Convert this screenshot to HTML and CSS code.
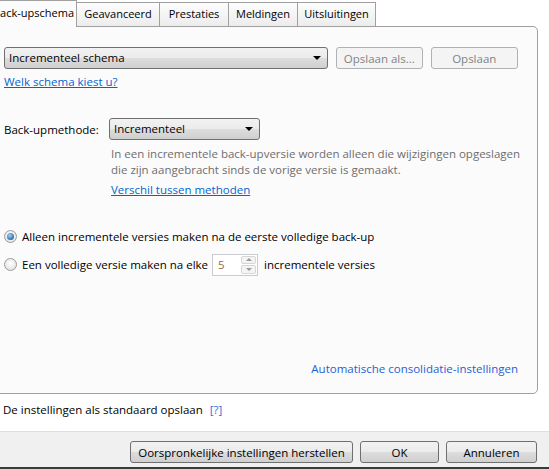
FILE: index.html
```html
<!DOCTYPE html>
<html lang="nl">
<head>
  <meta charset="UTF-8" />
  <title>Back-upinstellingen</title>
  <link rel="stylesheet" href="styles.css">
</head>
<body>
  <div class="dialog">
    <div class="tabs">
      <div class="tab active tab-schedule">Back-upschema</div>
      <div class="tab tab-advanced">Geavanceerd</div>
      <div class="tab tab-performance">Prestaties</div>
      <div class="tab tab-notify">Meldingen</div>
      <div class="tab tab-exclude">Uitsluitingen</div>
    </div>

    <section class="panel">
      <div class="scheme-row">
        <div class="combo combo-scheme">Incrementeel schema<span class="arrow"></span></div>
        <button class="btn btn-save-as" disabled>Opslaan als...</button>
        <button class="btn btn-save" disabled>Opslaan</button>
      </div>
      <a class="link scheme-help" href="#">Welk schema kiest u?</a>

      <div class="method-row">
        <span class="method-label">Back-upmethode:</span>
        <div class="combo combo-method">Incrementeel<span class="arrow"></span></div>
      </div>
      <div class="method-info">
        <p>In een incrementele back-upversie worden alleen die wijzigingen opgeslagen<br>die zijn aangebracht sinds de vorige versie is gemaakt.</p>
        <a class="link" href="#">Verschil tussen methoden</a>
      </div>

      <div class="options">
        <label class="radio-row">
          <span class="radio checked"></span>
          Alleen incrementele versies maken na de eerste volledige back-up
        </label>
        <label class="radio-row">
          <span class="radio"></span>
          Een volledige versie maken na elke
          <span class="spin">
            <span class="spin-value">5</span>
            <span class="spin-buttons">
              <span class="spin-up"></span>
              <span class="spin-down"></span>
            </span>
          </span>
          incrementele versies
        </label>
      </div>

      <a class="consolidate" href="#">Automatische consolidatie-instellingen</a>
    </section>

    <div class="defaults">De instellingen als standaard opslaan <a class="help" href="#">[?]</a></div>

    <div class="footer">
      <button class="btn btn-reset">Oorspronkelijke instellingen herstellen</button>
      <button class="btn btn-ok">OK</button>
      <button class="btn btn-cancel">Annuleren</button>
    </div>
  </div>
</body>
</html>
```

FILE: styles.css
```css
* {
  box-sizing: border-box;
}

body {
  margin: 0;
  background: #fff;
  font-family: "Open Sans", sans-serif;
  font-size: 11.5px;
  color: #000;
  overflow: hidden;
}

a {
  text-decoration: none;
}

.dialog {
  width: 561px;
  height: 469px;
  margin-left: -12px;
  display: flex;
  flex-direction: column;
}

/* tab strip */
.tabs {
  display: flex;
  align-items: flex-end;
  height: 26px;
  margin-left: -7px;
  position: relative;
  z-index: 1;
  font-size: 11px;
}

.tab {
  flex: none;
  height: 24px;
  line-height: 22px;
  border: 1px solid #a0a0a0;
  border-bottom: none;
  border-left: none;
  background: linear-gradient(#fdfdfd, #ececec);
  text-align: center;
  white-space: nowrap;
}

.tab.active {
  height: 27px;
  margin-bottom: -1px;
  padding-left: 11px;
  line-height: 24px;
  text-align: left;
  background: #fcfbfc;
  border-left: 1px solid #a0a0a0;
}

.tab-schedule { width: 96px; }
.tab-advanced { width: 83px; }
.tab-performance { width: 69px; }
.tab-notify { width: 69px; }
.tab-exclude { width: 78px; }

/* main page of the tab */
.panel {
  height: 368px;
  margin-right: 11px;
  padding: 20px 19px 16px 15px;
  border: 1px solid #a0a0a0;
  border-radius: 0 5px 5px 5px;
  background: #fcfbfc;
  display: flex;
  flex-direction: column;
}

.scheme-row {
  display: flex;
  align-items: center;
  gap: 8px;
}

.combo {
  position: relative;
  height: 22px;
  line-height: 19px;
  padding-left: 4px;
  border: 1px solid #707070;
  border-radius: 3px;
  background: linear-gradient(#f2f2f2 0%, #ebebeb 50%, #dddddd 51%, #cfcfcf 100%);
  white-space: nowrap;
}

.combo .arrow {
  position: absolute;
  right: 6px;
  top: 8px;
  border-left: 4px solid transparent;
  border-right: 4px solid transparent;
  border-top: 4px solid #000;
}

.combo-scheme {
  width: 326px;
}

.btn {
  height: 22px;
  padding: 0;
  border: 1px solid #707070;
  border-radius: 3px;
  background: linear-gradient(#f2f2f2 0%, #ebebeb 50%, #dddddd 51%, #cfcfcf 100%);
  font-family: inherit;
  font-size: inherit;
  color: #000;
  white-space: nowrap;
}

.btn:disabled {
  border-color: #adb2b5;
  background: #f4f4f4;
  color: #838383;
}

.btn-save-as {
  width: 87px;
}

.btn-save {
  width: 88px;
}

.link {
  color: #0066cc;
  text-decoration: underline;
}

.scheme-help {
  align-self: flex-start;
  margin-top: 5px;
  line-height: 15px;
}

.method-row {
  display: flex;
  align-items: center;
  margin-top: 29px;
}

.method-label {
  width: 105px;
}

.combo-method {
  width: 151px;
}

.method-info {
  margin-left: 107px;
  margin-top: 6px;
}

.method-info p {
  margin: 0;
  line-height: 16px;
  color: #6d6d6d;
  white-space: nowrap;
}

.method-info .link {
  display: inline-block;
  margin-top: 4px;
  line-height: 16px;
}

.options {
  margin-top: 28px;
  display: flex;
  flex-direction: column;
  gap: 7px;
}

.radio-row {
  display: flex;
  align-items: center;
  gap: 5px;
  height: 21px;
  white-space: nowrap;
}

.radio {
  width: 13px;
  height: 13px;
  border-radius: 50%;
  border: 1px solid #9a9a9a;
  background: radial-gradient(circle at 50% 40%, #ffffff, #dcdcdc);
  display: flex;
  align-items: center;
  justify-content: center;
}

.radio.checked::after {
  content: "";
  width: 7px;
  height: 7px;
  border-radius: 50%;
  background: radial-gradient(circle at 40% 35%, #9fd2f5, #2f6fad 70%, #1c4f85);
}

.spin {
  display: flex;
  width: 46px;
  height: 22px;
  margin: 0 1px 0 -1px;
  border: 1px solid #c8cbd0;
  background: #fff;
}

.spin-value {
  flex: 1;
  padding-left: 5px;
  line-height: 20px;
  color: #9a6a3a;
}

.spin-buttons {
  width: 17px;
  display: flex;
  flex-direction: column;
  gap: 1px;
  padding: 1px;
}

.spin-up,
.spin-down {
  flex: 1;
  border: 1px solid #d6d6d6;
  border-radius: 2px;
  background: #f4f4f4;
  display: flex;
  align-items: center;
  justify-content: center;
}

.spin-up::after {
  content: "";
  border-left: 3px solid transparent;
  border-right: 3px solid transparent;
  border-bottom: 3px solid #9a9a9a;
}

.spin-down::after {
  content: "";
  border-left: 3px solid transparent;
  border-right: 3px solid transparent;
  border-top: 3px solid #9a9a9a;
}

.consolidate {
  margin-top: auto;
  align-self: flex-end;
  color: #1e5fd6;
  line-height: 16px;
}

/* below the tab control */
.defaults {
  padding: 8px 0 0 15px;
  height: 37px;
}

.help {
  margin-left: 4px;
  color: #2f6fd6;
}

.footer {
  flex: 1;
  display: flex;
  justify-content: flex-end;
  gap: 7px;
  padding: 9px 12px 0 0;
  background: #f0f0f0;
  border-top: 1px solid #dfdfdf;
  border-bottom: 2px solid #3a3a3a;
}

.btn-reset {
  width: 223px;
}

.btn-ok {
  width: 79px;
}

.btn-cancel {
  width: 91px;
}
```
